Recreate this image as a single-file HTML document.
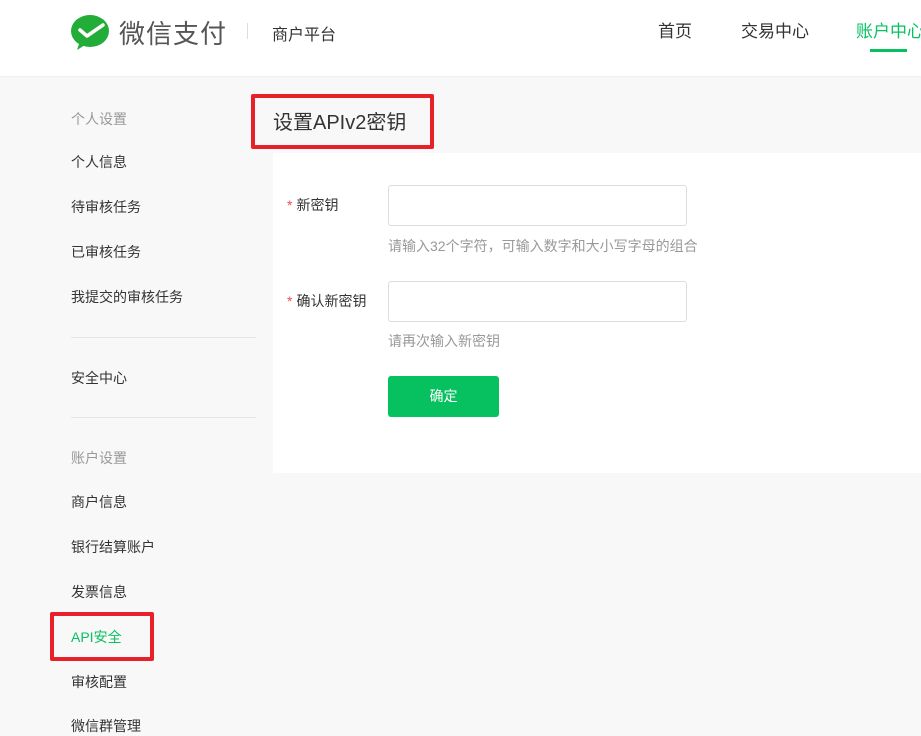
<!DOCTYPE html>
<html><head><meta charset="utf-8"><style>
*{margin:0;padding:0;box-sizing:border-box}
body{width:921px;height:725px;overflow:hidden;background:#f8f8f8;font-family:"Liberation Sans","Noto Sans CJK SC",sans-serif;color:#333;position:relative}
.hd{position:absolute;left:0;top:0;width:921px;height:76px;background:#fff;box-shadow:0 1px 2px rgba(0,0,0,.05)}
.a{position:absolute;white-space:nowrap}
.side{font-size:14px;color:#333}
.sg{font-size:14px;color:#999}
.line{position:absolute;left:71px;width:185px;height:1px;background:#e5e5e5}
.card{position:absolute;left:273px;top:153px;width:660px;height:320px;background:#fff}
.inp{position:absolute;left:388px;width:299px;height:41px;border:1px solid #ddd;border-radius:3px;background:#fff}
.tip{font-size:14px;color:#999}
.lab{font-size:14px;color:#333}
.lab b{color:#f04b4b;font-weight:normal;margin-right:4px}
.red{position:absolute;border:4px solid #e8202a;border-radius:2px}
</style></head><body>
<div class="hd">
<svg class="a" style="left:70px;top:14px" width="42" height="36" viewBox="0 0 42 36"><ellipse cx="20" cy="17" rx="19" ry="16" fill="#22ac38"/><path d="M9 30 L7 36 L15 31Z" fill="#22ac38"/><path d="M10 16 L17 22 L33 11" stroke="#fff" stroke-width="3.5" fill="none" stroke-linecap="round" stroke-linejoin="round"/></svg>
<div class="a" style="left:119px;top:14px;font-size:26px;color:#555;letter-spacing:1px">微信支付</div>
<div class="a" style="left:247px;top:23px;width:1px;height:16px;background:#ddd"></div>
<div class="a" style="left:272px;top:21px;font-size:16px;color:#333">商户平台</div>
<div class="a" style="left:658px;top:17px;font-size:17px;color:#333">首页</div>
<div class="a" style="left:741px;top:17px;font-size:17px;color:#333">交易中心</div>
<div class="a" style="left:856px;top:17px;font-size:17px;color:#07c160">账户中心</div>
<div class="a" style="left:870px;top:49px;width:37px;height:3px;background:#07c160"></div>
</div>
<div class="a sg" style="left:71px;top:109px">个人设置</div>
<div class="a side" style="left:71px;top:152px">个人信息</div>
<div class="a side" style="left:71px;top:197px">待审核任务</div>
<div class="a side" style="left:71px;top:242px">已审核任务</div>
<div class="a side" style="left:71px;top:287px">我提交的审核任务</div>
<div class="line" style="top:337px"></div>
<div class="a side" style="left:71px;top:368px">安全中心</div>
<div class="line" style="top:417px"></div>
<div class="a sg" style="left:71px;top:448px">账户设置</div>
<div class="a side" style="left:71px;top:492px">商户信息</div>
<div class="a side" style="left:71px;top:537px">银行结算账户</div>
<div class="a side" style="left:71px;top:582px">发票信息</div>
<div class="a side" style="left:71px;top:627px;color:#07c160">API安全</div>
<div class="a side" style="left:71px;top:672px">审核配置</div>
<div class="a side" style="left:71px;top:716px">微信群管理</div>
<div class="red" style="left:50px;top:612px;width:104px;height:49px"></div>
<div class="a" style="left:273px;top:106px;font-size:20px;color:#333">设置APIv2密钥</div>
<div class="red" style="left:251px;top:94px;width:183px;height:55px"></div>
<div class="card"></div>
<div class="a lab" style="left:287px;top:195px"><b>*</b>新密钥</div>
<div class="inp" style="top:185px"></div>
<div class="a tip" style="left:388px;top:236px">请输入32个字符，可输入数字和大小写字母的组合</div>
<div class="a lab" style="left:287px;top:291px"><b>*</b>确认新密钥</div>
<div class="inp" style="top:281px"></div>
<div class="a tip" style="left:388px;top:331px">请再次输入新密钥</div>
<div class="a" style="left:388px;top:376px;width:111px;height:41px;background:#07c160;border-radius:3px;color:#fff;font-size:14px;text-align:center;line-height:40px">确定</div>
</body></html>
